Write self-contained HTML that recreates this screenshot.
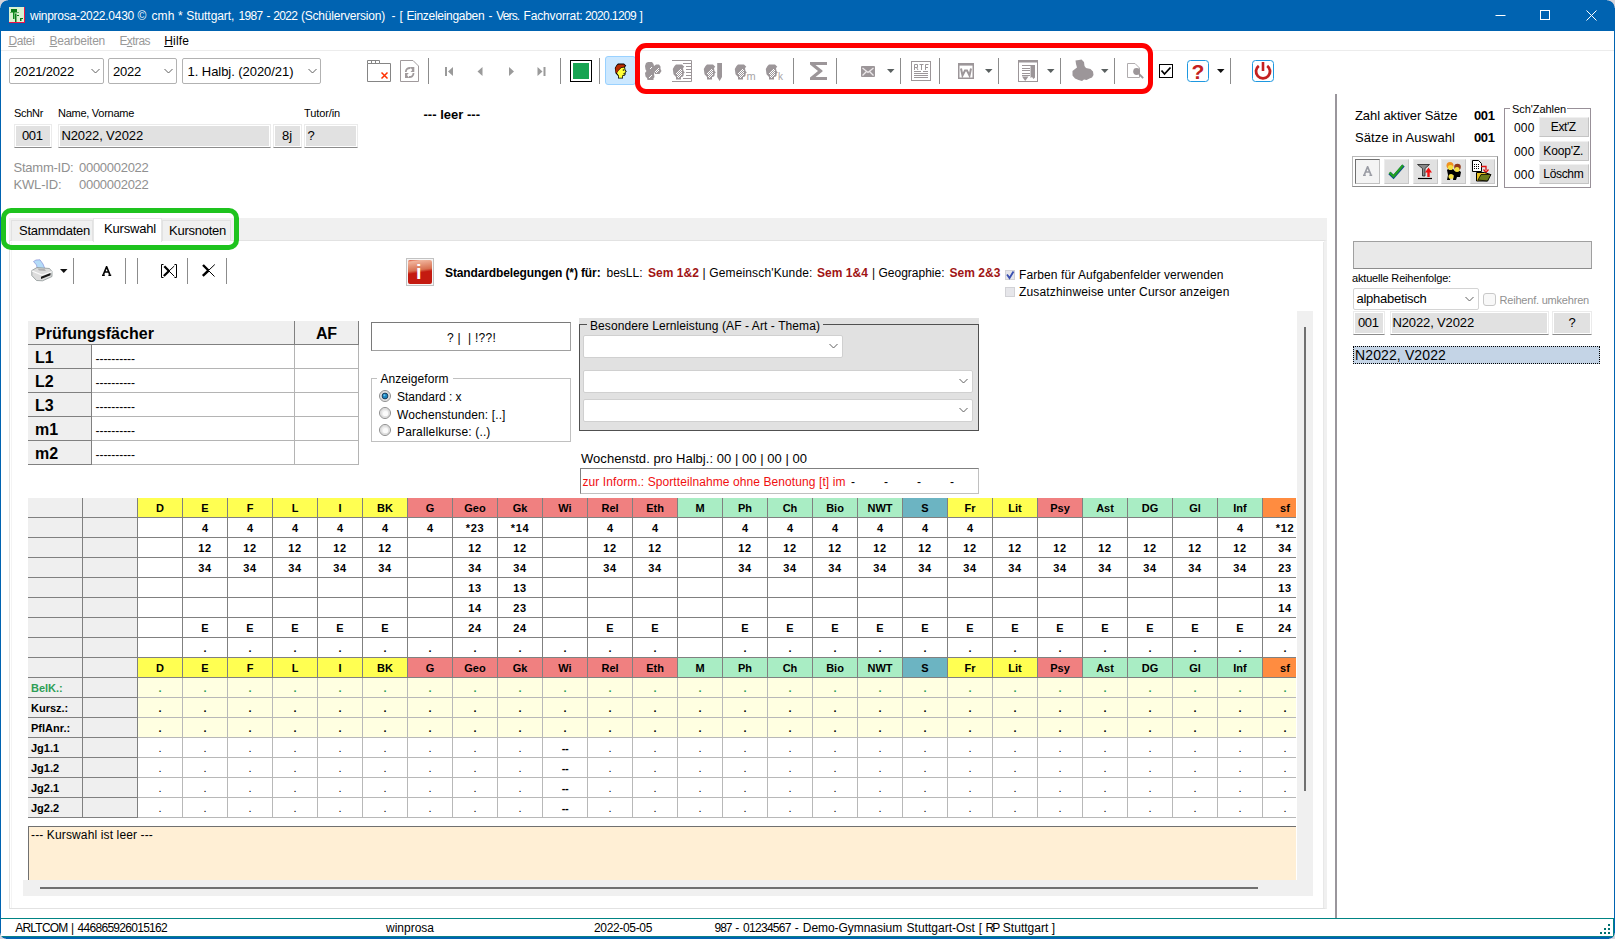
<!DOCTYPE html>
<html><head><meta charset="utf-8"><title>winprosa</title>
<style>
html,body{margin:0;padding:0;}
body{width:1615px;height:939px;overflow:hidden;background:#fff;position:relative;font-family:"Liberation Sans",sans-serif;}
.b{position:absolute;box-sizing:border-box;}
.t{position:absolute;line-height:1;white-space:pre;font-family:"Liberation Sans",sans-serif;}
u{text-decoration:underline;text-underline-offset:1px;}
.gc{position:absolute;width:44px;height:19px;line-height:19px;text-align:center;font-size:11px;font-weight:bold;white-space:pre;padding-top:1px;box-sizing:content-box;}
</style></head><body>
<div class="b" style="left:0px;top:0px;width:1615px;height:31px;background:#0063b1;"></div>
<div class="b" style="left:0px;top:31px;width:1px;height:908px;background:#0063b1;"></div>
<div class="b" style="left:1614px;top:31px;width:1px;height:908px;background:#0063b1;"></div>
<svg class="b" style="left:9px;top:7px;" width="16" height="16" viewBox="0 0 16 16"><rect x="0" y="0" width="16" height="16" fill="#d8f2d2"/><rect x="15" y="0" width="1" height="16" fill="#f01048"/><rect x="0" y="15" width="16" height="1" fill="#f01048"/>
<rect x="2" y="2" width="6" height="3" fill="#0a7a1a"/><rect x="1" y="5" width="9" height="0.700" fill="#3a9a3a"/><rect x="4" y="5" width="1.500" height="7" fill="#0a8a1a"/><rect x="6" y="6.500" width="1.500" height="8.500" fill="#0a7a1a"/><rect x="8" y="8" width="2" height="1" fill="#0a7a1a"/><rect x="11" y="11" width="1.500" height="3" fill="#0a7a1a"/><rect x="12" y="11" width="2" height="1" fill="#0a7a1a"/></svg>
<div class="t" style="left:30px;top:9.84px;font-size:12px;color:#fff;letter-spacing:-0.264px;">winprosa-2022.0430</div>
<div class="t" style="left:137.5px;top:9.84px;font-size:12px;color:#fff;letter-spacing:0.658px;">©</div>
<div class="t" style="left:151.5px;top:9.84px;font-size:12px;color:#fff;letter-spacing:0.11px;">cmh</div>
<div class="t" style="left:178px;top:9.84px;font-size:12px;color:#fff;">*</div>
<div class="t" style="left:186.3px;top:9.84px;font-size:12px;color:#fff;letter-spacing:-0.069px;">Stuttgart,</div>
<div class="t" style="left:238.5px;top:9.84px;font-size:12px;color:#fff;letter-spacing:-0.674px;">1987</div>
<div class="t" style="left:266.6px;top:9.84px;font-size:12px;color:#fff;">-</div>
<div class="t" style="left:273.2px;top:9.84px;font-size:12px;color:#fff;letter-spacing:-0.674px;">2022</div>
<div class="t" style="left:301px;top:9.84px;font-size:12px;color:#fff;letter-spacing:-0.21px;">(Schülerversion)</div>
<div class="t" style="left:391.6px;top:9.84px;font-size:12px;color:#fff;">-</div>
<div class="t" style="left:399.5px;top:9.84px;font-size:12px;color:#fff;">[</div>
<div class="t" style="left:406.4px;top:9.84px;font-size:12px;color:#fff;letter-spacing:-0.291px;">Einzeleingaben</div>
<div class="t" style="left:488.6px;top:9.84px;font-size:12px;color:#fff;">-</div>
<div class="t" style="left:496.3px;top:9.84px;font-size:12px;color:#fff;letter-spacing:-0.869px;">Vers.</div>
<div class="t" style="left:523.5px;top:9.84px;font-size:12px;color:#fff;letter-spacing:-0.153px;">Fachvorrat:</div>
<div class="t" style="left:585px;top:9.84px;font-size:12px;color:#fff;letter-spacing:-0.636px;">2020.1209</div>
<div class="t" style="left:639.6px;top:9.84px;font-size:12px;color:#fff;">]</div>
<svg class="b" style="left:1490px;top:5px;" width="120" height="22" viewBox="0 0 120 22"><path d="M5.5 10.5h10" stroke="#fff" stroke-width="1" fill="none"/>
<rect x="50.5" y="5.500" width="9" height="9" stroke="#fff" stroke-width="1" fill="none"/>
<path d="M96.500 5.500l10 10M106.500 5.500l-10 10" stroke="#fff" stroke-width="1" fill="none"/></svg>
<div class="b" style="left:1px;top:31px;width:1613px;height:19px;background:#fff;"></div>
<div class="t" style="left:8.4px;top:34.84px;font-size:12px;color:#999;letter-spacing:-0.403px;"><u>D</u>atei</div>
<div class="t" style="left:49.5px;top:34.84px;font-size:12px;color:#999;letter-spacing:-0.255px;"><u>B</u>earbeiten</div>
<div class="t" style="left:119.4px;top:34.84px;font-size:12px;color:#999;letter-spacing:-0.585px;">E<u>x</u>tras</div>
<div class="t" style="left:164.2px;top:34.84px;font-size:12px;color:#000;letter-spacing:0.199px;"><u>H</u>ilfe</div>
<div class="b" style="left:1px;top:50px;width:1613px;height:1px;background:#ececec;"></div>
<div class="b" style="left:1px;top:919px;width:1613px;height:18px;background:#fff;"></div>
<div class="b" style="left:1px;top:918px;width:1613px;height:1px;background:#008484;"></div>
<div class="b" style="left:1613px;top:918px;width:1px;height:19px;background:#008484;"></div>
<div class="b" style="left:1px;top:936px;width:1613px;height:1px;background:#0a8088;"></div>
<div class="b" style="left:0px;top:937px;width:1615px;height:2px;background:#0063b1;"></div>
<div class="b" style="left:1608px;top:924px;width:2px;height:2px;background:#007070;"></div>
<div class="b" style="left:1604px;top:928px;width:2px;height:2px;background:#007070;"></div>
<div class="b" style="left:1608px;top:928px;width:2px;height:2px;background:#007070;"></div>
<div class="b" style="left:1600px;top:932px;width:2px;height:2px;background:#007070;"></div>
<div class="b" style="left:1604px;top:932px;width:2px;height:2px;background:#007070;"></div>
<div class="b" style="left:1608px;top:932px;width:2px;height:2px;background:#007070;"></div>
<div class="t" style="left:15.3px;top:921.84px;font-size:12px;color:#000;letter-spacing:-0.797px;">ARLTCOM</div>
<div class="t" style="left:71px;top:921.84px;font-size:12px;color:#000;">|</div>
<div class="t" style="left:77.6px;top:921.84px;font-size:12px;color:#000;letter-spacing:-0.714px;">446865926015162</div>
<div class="t" style="left:386px;top:921.84px;font-size:12px;color:#000;letter-spacing:-0.003px;">winprosa</div>
<div class="t" style="left:594px;top:921.84px;font-size:12px;color:#000;letter-spacing:-0.339px;">2022-05-05</div>
<div class="t" style="left:714.5px;top:921.84px;font-size:12px;color:#000;letter-spacing:-1.007px;">987</div>
<div class="t" style="left:735.3px;top:921.84px;font-size:12px;color:#000;">-</div>
<div class="t" style="left:743px;top:921.84px;font-size:12px;color:#000;letter-spacing:-0.699px;">01234567</div>
<div class="t" style="left:794.8px;top:921.84px;font-size:12px;color:#000;">-</div>
<div class="t" style="left:802.8px;top:921.84px;font-size:12px;color:#000;letter-spacing:-0.052px;">Demo-Gymnasium</div>
<div class="t" style="left:906.6px;top:921.84px;font-size:12px;color:#000;letter-spacing:0.014px;">Stuttgart-Ost</div>
<div class="t" style="left:978.8px;top:921.84px;font-size:12px;color:#000;">[</div>
<div class="t" style="left:985.4px;top:921.84px;font-size:12px;color:#000;letter-spacing:-1.735px;">RP</div>
<div class="t" style="left:1002.8px;top:921.84px;font-size:12px;color:#000;letter-spacing:0.027px;">Stuttgart</div>
<div class="t" style="left:1051.8px;top:921.84px;font-size:12px;color:#000;">]</div>
<div class="b" style="left:0px;top:0px;width:8px;height:8px;background:radial-gradient(circle at 100% 100%, transparent 7.200px, #d4d4dc 8px);"></div>
<div class="b" style="left:1607px;top:0px;width:8px;height:8px;background:radial-gradient(circle at 0 100%, transparent 7.200px, #d4d4dc 8px);"></div>
<div class="b" style="left:0px;top:933px;width:6px;height:6px;background:radial-gradient(circle at 100% 0, transparent 5.200px, #d4d4dc 6px);"></div>
<div class="b" style="left:1609px;top:933px;width:6px;height:6px;background:radial-gradient(circle at 0 0, transparent 5.200px, #d4d4dc 6px);"></div>
<div class="b" style="left:9px;top:58px;width:95px;height:26px;background:#fff;border:1px solid #b2b2b2;border-radius:2px;"></div>
<div class="t" style="left:14px;top:65.00px;font-size:13px;color:#000;letter-spacing:-0.161px;">2021/2022</div>
<svg class="b" style="left:90px;top:67px;" width="11" height="8" viewBox="0 0 11 8"><path d="M1.500 2.000L5.500 6.000L9.500 2.000" fill="none" stroke="#606060" stroke-width="1"/></svg>
<div class="b" style="left:108px;top:58px;width:69px;height:26px;background:#fff;border:1px solid #b2b2b2;border-radius:2px;"></div>
<div class="t" style="left:113px;top:65.00px;font-size:13px;color:#000;letter-spacing:-0.23px;">2022</div>
<svg class="b" style="left:163px;top:67px;" width="11" height="8" viewBox="0 0 11 8"><path d="M1.500 2.000L5.500 6.000L9.500 2.000" fill="none" stroke="#606060" stroke-width="1"/></svg>
<div class="b" style="left:182px;top:58px;width:139px;height:26px;background:#fff;border:1px solid #b2b2b2;border-radius:2px;"></div>
<div class="t" style="left:187.5px;top:65.00px;font-size:13px;color:#000;letter-spacing:-0.05px;">1. Halbj. (2020/21)</div>
<svg class="b" style="left:307px;top:67px;" width="11" height="8" viewBox="0 0 11 8"><path d="M1.500 2.000L5.500 6.000L9.500 2.000" fill="none" stroke="#606060" stroke-width="1"/></svg>
<svg class="b" style="left:367px;top:60px;" width="25" height="23" viewBox="0 0 25 23"><path d="M0.500 3.500V0.500H12.500V3.500H23.500V21.500H0.500V3.500H12.500M4.500 0.500V3.500M8.500 0.500V3.500" fill="none" stroke="#858585" stroke-width="1"/><path d="M14.500 12.500L20.500 18.500M20.500 12.500L14.500 18.500" stroke="#ff3000" stroke-width="1.500" fill="none"/></svg>
<svg class="b" style="left:400px;top:60px;" width="20" height="23" viewBox="0 0 20 23"><path d="M0.500 0.500H13L18.500 6V21.500H0.500Z" fill="none" stroke="#a09a9c" stroke-width="1"/><path d="M5.800 12C5.800 9 8 7.800 10.500 8" fill="none" stroke="#a09a9c" stroke-width="1.800"/><path d="M10 7H14.300V12H10.500L12.300 10z" fill="#a09a9c"/><path d="M13.500 13C13.500 16 11.500 17.200 9 17" fill="none" stroke="#a09a9c" stroke-width="1.800"/><path d="M9.300 18H5V13H8.800L7 15z" fill="#a09a9c"/></svg>
<div class="b" style="left:428px;top:58px;width:1px;height:26px;background:#8c8c8c;"></div>
<svg class="b" style="left:445px;top:67px;" width="9" height="10" viewBox="0 0 9 10"><rect x="0" y="0" width="2" height="9" fill="#9a9a9a"/><path d="M8 0v9L3 4.500z" fill="#9a9a9a"/></svg>
<svg class="b" style="left:477px;top:67px;" width="6" height="10" viewBox="0 0 6 10"><path d="M5.500 0v9L0.500 4.500z" fill="#9a9a9a"/></svg>
<svg class="b" style="left:509px;top:67px;" width="6" height="10" viewBox="0 0 6 10"><path d="M0 0v9L5 4.500z" fill="#9a9a9a"/></svg>
<svg class="b" style="left:537px;top:67px;" width="10" height="10" viewBox="0 0 10 10"><rect x="6.500" y="0" width="2" height="9" fill="#9a9a9a"/><path d="M0.500 0v9L5.500 4.500z" fill="#9a9a9a"/></svg>
<div class="b" style="left:560px;top:58px;width:1px;height:26px;background:#8c8c8c;"></div>
<div class="b" style="left:570px;top:60px;width:22px;height:22px;background:#fff;border:1px solid #000;"></div>
<div class="b" style="left:573px;top:63px;width:16px;height:16px;background:#16a452;"></div>
<div class="b" style="left:599px;top:58px;width:1px;height:26px;background:#8c8c8c;"></div>
<div class="b" style="left:605px;top:56px;width:31px;height:29px;background:#cce8ff;border:1px solid #99d1ff;border-radius:3px;"></div>
<svg class="b" style="left:614px;top:63px;" width="14" height="17" viewBox="0 0 14 17"><path d="M4 0.500H10L12.300 2.800L11 4L11.500 7L12.800 8.600L11.600 9.600V11.200L11 12.600L9 13V15.500H4V13L1.500 10.200L0.800 5L2.500 2z" fill="#000"/><path d="M4.600 7.600L7.200 5L10.300 4.400L10.600 7.200L11.700 8.600L10.700 9.400V11L10.300 11.900L8.300 12.300V14.700H4.800V12.600L2.900 10z" fill="#ffff38"/><path d="M1.600 9.400L1.500 5L3 2.500L4.500 1.500H9.800L11.300 3L10 3.800L7 4.500L4.500 7L3 9.800z" fill="#b82a00"/><rect x="8.800" y="6.400" width="1.100" height="1.300" fill="#000"/><path d="M9.300 10.800H11" stroke="#000" stroke-width="0.900"/></svg>
<div class="b" style="left:635px;top:43px;width:518px;height:51px;border:5px solid #ff0000;border-radius:11px;"></div>
<svg class="b" style="left:0;top:0" width="0" height="0"><defs><pattern id="ck" width="2" height="2" patternUnits="userSpaceOnUse"><rect width="2" height="2" fill="#fff"/><rect width="1" height="1" fill="#9c9699"/><rect x="1" y="1" width="1" height="1" fill="#9c9699"/></pattern></defs></svg>
<svg class="b" style="left:644px;top:61px;" width="18" height="20" viewBox="0 0 18 20"><path d="M2 2L4 1H8L9.500 3L10 5L12 3.500H15L16.500 5.500V8L17.500 10L16.500 11.500L15.500 13H11L10.500 11L10 12.500L10.500 16L9.500 17.500V19H3.500L3 17L1.500 15.500L1 12L2.500 10L1.500 8.500L1 5z" fill="#9c9699"/><path d="M5 7L8 4V6L6 9zM11 10L15 6V9L12 12zM4 16L8 12V15L5 18z" fill="url(#ck)" shape-rendering="crispEdges"/></svg>
<svg class="b" style="left:672px;top:60px;" width="21" height="23" viewBox="0 0 21 23"><path d="M0 0.500H19.500V21.500H0" stroke="#9c9699" stroke-width="1" fill="none"/><path d="M11 3.500h8M14 6.500h5M14 9.500h5M14 12.500h5M14 15.500h5M11 18.500h8" stroke="#9c9699" stroke-width="1"/><g transform="translate(0,4) scale(1.0)"><path d="M4 0.500H10L12.300 2.800L11 4L11.500 7L12.800 8.600L11.600 9.600V11.200L11 12.600L9 13V15.500H4V13L1.500 10.200L0.800 5L2.500 2z" fill="#9c9699"/><path d="M5 8L8 5H10V11L8 12V14H5V12L4 10z" fill="url(#ck)" shape-rendering="crispEdges"/></g></svg>
<svg class="b" style="left:702px;top:62px;" width="22" height="20" viewBox="0 0 22 20"><g transform="translate(1,2) scale(1.0)"><path d="M4 0.500H10L12.300 2.800L11 4L11.500 7L12.800 8.600L11.600 9.600V11.200L11 12.600L9 13V15.500H4V13L1.500 10.200L0.800 5L2.500 2z" fill="#9c9699"/><path d="M5 8L8 5H10V11L8 12V14H5V12L4 10z" fill="url(#ck)" shape-rendering="crispEdges"/></g><path d="M15.200 1h4.800v14l-2.400 4l-2.400-4z" fill="#9c9699"/></svg>
<svg class="b" style="left:733px;top:62px;" width="14" height="18" viewBox="0 0 14 18"><g transform="translate(1,2) scale(1.0)"><path d="M4 0.500H10L12.300 2.800L11 4L11.500 7L12.800 8.600L11.600 9.600V11.200L11 12.600L9 13V15.500H4V13L1.500 10.200L0.800 5L2.500 2z" fill="#9c9699"/><path d="M5 8L8 5H10V11L8 12V14H5V12L4 10z" fill="url(#ck)" shape-rendering="crispEdges"/></g></svg>
<div class="t" style="left:746.5px;top:71.19px;font-size:11px;color:#a8a4a6;">m</div>
<svg class="b" style="left:764px;top:62px;" width="14" height="18" viewBox="0 0 14 18"><g transform="translate(1,2) scale(1.0)"><path d="M4 0.500H10L12.300 2.800L11 4L11.500 7L12.800 8.600L11.600 9.600V11.200L11 12.600L9 13V15.500H4V13L1.500 10.200L0.800 5L2.500 2z" fill="#9c9699"/><path d="M5 8L8 5H10V11L8 12V14H5V12L4 10z" fill="url(#ck)" shape-rendering="crispEdges"/></g></svg>
<div class="t" style="left:778px;top:72.03px;font-size:10px;color:#a8a4a6;">k</div>
<div class="b" style="left:793px;top:58px;width:1px;height:26px;background:#8c8c8c;"></div>
<svg class="b" style="left:810px;top:62px;" width="18" height="18" viewBox="0 0 18 18"><path d="M0 0H17V3H5.500L12.500 8.500V9.500L5.500 15H17V18H0V15.500L8 9L0 2.500z" fill="#9c9699"/></svg>
<div class="b" style="left:836px;top:58px;width:1px;height:26px;background:#8c8c8c;"></div>
<svg class="b" style="left:861px;top:66px;" width="14" height="11" viewBox="0 0 14 11"><rect x="0" y="0" width="14" height="11" rx="1" fill="#9c9699"/><path d="M1.500 2L7 6.500L12.500 2M1.500 9.500L5.500 5.500M12.500 9.500L8.500 5.500" stroke="#ece8ea" stroke-width="1.300" fill="none"/></svg>
<svg class="b" style="left:887px;top:69px;" width="8" height="4" viewBox="0 0 8 4"><path d="M0 0h7.500L3.750 4z" fill="#5a6060"/></svg>
<div class="b" style="left:900px;top:58px;width:1px;height:26px;background:#8c8c8c;"></div>
<svg class="b" style="left:911px;top:61px;" width="21" height="21" viewBox="0 0 21 21"><rect x="0.500" y="0.500" width="19" height="19" fill="#fff" stroke="#9c9699"/><path d="M3 10.500h7M12 10.500h5M3 12.500h14M3 14.500h14M3 16.500h14" stroke="#9c9699" stroke-width="1"/><path d="M3.500 9V3.500H6.500V6.500H3.500M5.500 6.500L7 9M8.500 3.500H12.500M10.500 3.500V9M14.500 9V3.500H17.500M14.500 6.500H17" fill="none" stroke="#9c9699" stroke-width="1"/></svg>
<div class="b" style="left:939px;top:58px;width:1px;height:26px;background:#8c8c8c;"></div>
<svg class="b" style="left:958px;top:63px;" width="17" height="17" viewBox="0 0 17 17"><rect x="0.750" y="0.750" width="14.500" height="14.500" fill="#fff" stroke="#9c9699" stroke-width="1.500"/><rect x="0" y="0" width="16" height="2.600" fill="#9c9699"/><path d="M3 5.500L4.500 12.500L7 7.500H9L11.500 12.500L13 5.500" fill="none" stroke="#9c9699" stroke-width="2"/></svg>
<svg class="b" style="left:985px;top:69px;" width="8" height="4" viewBox="0 0 8 4"><path d="M0 0h7.500L3.750 4z" fill="#5a6060"/></svg>
<div class="b" style="left:998px;top:58px;width:1px;height:26px;background:#8c8c8c;"></div>
<svg class="b" style="left:1018px;top:60px;" width="21" height="23" viewBox="0 0 21 23"><rect x="0.500" y="0.500" width="19" height="21" fill="#fff" stroke="#9c9699"/><rect x="0" y="0" width="20" height="2.500" fill="#9c9699"/><path d="M4 5.500h9M4 8.500h8M4 10.500h8M4 13.500h8M4 15.500h8" stroke="#9c9699" stroke-width="1"/><path d="M12.500 5H17V17.500L15.500 19L14 17L12.500 18z" fill="#9c9699"/><path d="M4 16.500H10.500L7.200 21z" fill="#9c9699"/></svg>
<svg class="b" style="left:1047px;top:69px;" width="8" height="4" viewBox="0 0 8 4"><path d="M0 0h7.500L3.750 4z" fill="#5a6060"/></svg>
<div class="b" style="left:1060px;top:58px;width:1px;height:26px;background:#8c8c8c;"></div>
<svg class="b" style="left:1072px;top:59px;" width="23" height="23" viewBox="0 0 23 23"><path d="M3.500 1.500L7 1L9.500 0.500L12 3L12.500 7L14 9L18.500 10L21 12.500L21.500 16L20 18.500L17.500 19.500L14.500 21L12 20.500L10 22L6.500 21L3 19.500L0.500 16.500V12L3 10L5 8.500L4 5z" fill="#9c9699"/></svg>
<svg class="b" style="left:1101px;top:69px;" width="8" height="4" viewBox="0 0 8 4"><path d="M0 0h7.500L3.750 4z" fill="#5a6060"/></svg>
<div class="b" style="left:1114px;top:58px;width:1px;height:26px;background:#8c8c8c;"></div>
<svg class="b" style="left:1127px;top:63px;" width="18" height="16" viewBox="0 0 18 16"><path d="M0.500 0.500H8L12.500 5V14.500H0.500Z" fill="#fff" stroke="#b0acae" stroke-width="1"/><circle cx="9.600" cy="8.500" r="3.400" fill="#9c9699"/><path d="M12 11L16.200 15.200" stroke="#9c9699" stroke-width="1.800"/></svg>
<div class="b" style="left:1159px;top:64px;width:14px;height:14px;background:#fff;border:1px solid #000;"></div>
<svg class="b" style="left:1159px;top:64px;" width="14" height="14" viewBox="0 0 14 14"><path d="M2.500 6.500L5.500 10L11.500 3.500" fill="none" stroke="#000" stroke-width="1.800"/></svg>
<div class="b" style="left:1187px;top:60px;width:22px;height:22px;background:#fff;border:1.500px solid #1e98e0;border-radius:3.500px;"></div>
<div class="t" style="left:1191.5px;top:61.02px;font-size:21px;color:#c42020;font-weight:bold;">?</div>
<svg class="b" style="left:1217px;top:69px;" width="8" height="4" viewBox="0 0 8 4"><path d="M0 0h7.500L3.750 4z" fill="#111"/></svg>
<div class="b" style="left:1230px;top:58px;width:1px;height:26px;background:#8c8c8c;"></div>
<div class="b" style="left:1252px;top:60px;width:22px;height:22px;background:#fff;border:1.500px solid #1e98e0;border-radius:3.500px;"></div>
<svg class="b" style="left:1252px;top:60px;" width="22" height="22" viewBox="0 0 22 22"><path d="M6.800 5.800A7 7 0 1 0 15.200 5.800" fill="none" stroke="#c42020" stroke-width="2.800"/><path d="M11 2V11" stroke="#c42020" stroke-width="2.600"/></svg>
<div class="t" style="left:14px;top:107.69px;font-size:11px;color:#000;letter-spacing:-0.313px;">SchNr</div>
<div class="t" style="left:58px;top:107.69px;font-size:11px;color:#000;letter-spacing:-0.268px;">Name, Vorname</div>
<div class="t" style="left:304px;top:107.69px;font-size:11px;color:#000;letter-spacing:-0.111px;">Tutor/in</div>
<div class="t" style="left:423.5px;top:107.50px;font-size:13px;color:#000;font-weight:bold;letter-spacing:0.014px;">--- leer ---</div>
<div class="b" style="left:14px;top:124px;width:38px;height:24px;background:#e1e1e1;border:1px solid #ebebeb;border-bottom:1px solid #8c8c8c;box-shadow:inset 0 0 0 1px #fff;"></div>
<div class="t" style="left:22px;top:129.00px;font-size:13px;color:#000;letter-spacing:-0.397px;">001</div>
<div class="b" style="left:58px;top:124px;width:213px;height:24px;background:#e1e1e1;border:1px solid #ebebeb;border-bottom:1px solid #8c8c8c;box-shadow:inset 0 0 0 1px #fff;"></div>
<div class="t" style="left:61.5px;top:129.00px;font-size:13px;color:#000;letter-spacing:-0.135px;">N2022, V2022</div>
<div class="b" style="left:273px;top:124px;width:29px;height:24px;background:#e1e1e1;border:1px solid #ebebeb;border-bottom:1px solid #8c8c8c;box-shadow:inset 0 0 0 1px #fff;"></div>
<div class="t" style="left:282px;top:129.00px;font-size:13px;color:#000;">8j</div>
<div class="b" style="left:304px;top:124px;width:54px;height:24px;background:#e1e1e1;border:1px solid #ebebeb;border-bottom:1px solid #8c8c8c;box-shadow:inset 0 0 0 1px #fff;"></div>
<div class="t" style="left:307.5px;top:129.00px;font-size:13px;color:#000;">?</div>
<div class="t" style="left:13.5px;top:161.00px;font-size:13px;color:#909090;letter-spacing:-0.235px;">Stamm-ID:</div>
<div class="t" style="left:79px;top:161.00px;font-size:13px;color:#909090;letter-spacing:-0.28px;">0000002022</div>
<div class="t" style="left:13.5px;top:178.00px;font-size:13px;color:#909090;letter-spacing:-0.159px;">KWL-ID:</div>
<div class="t" style="left:79px;top:178.00px;font-size:13px;color:#909090;letter-spacing:-0.28px;">0000002022</div>
<div class="b" style="left:9px;top:218px;width:1318px;height:23px;background:#f0f0f0;"></div>
<div class="b" style="left:9px;top:240px;width:1318px;height:669px;background:#fff;border:1px solid #e2e2e2;border-right:3px solid #f0f0f0;"></div>
<div class="b" style="left:1323px;top:242px;width:1px;height:666px;background:#e8e8e8;"></div>
<div class="b" style="left:11px;top:242px;width:1px;height:666px;background:#f4f4f4;"></div>
<div class="b" style="left:11px;top:220px;width:82px;height:21px;background:#f0f0f0;border:1px solid #e2e2e2;border-bottom:none;"></div>
<div class="b" style="left:162px;top:220px;width:69px;height:21px;background:#f0f0f0;border:1px solid #e2e2e2;border-bottom:none;"></div>
<div class="b" style="left:93px;top:218px;width:69px;height:24px;background:#fff;border:1px solid #e6e6e6;border-bottom:none;"></div>
<div class="t" style="left:19px;top:224.00px;font-size:13px;color:#000;letter-spacing:-0.27px;">Stammdaten</div>
<div class="t" style="left:104px;top:222.00px;font-size:13px;color:#000;letter-spacing:-0.184px;">Kurswahl</div>
<div class="t" style="left:169px;top:224.00px;font-size:13px;color:#000;letter-spacing:-0.252px;">Kursnoten</div>
<div class="b" style="left:1px;top:208px;width:238px;height:42px;border:5px solid #1ec31e;border-radius:10px;"></div>
<svg class="b" style="left:31px;top:259px;" width="22" height="23" viewBox="0 0 22 23"><path d="M2.500 2.500L5 1L9 0.800L12 5L14 10L6.500 11L5.500 6z" fill="#b4dcf8" stroke="#8890d8" stroke-width="0.700"/>
<path d="M0.800 11.500L6 8.500L18.500 9.500L21 12.500V17.500L11.500 21.800L5.500 21.500L0.800 16.500z" fill="#dcdcdc" stroke="#8c9494" stroke-width="0.800"/>
<path d="M1 12L11 16L21 12.800" fill="none" stroke="#fafafa" stroke-width="1.200"/>
<path d="M10 17.800L19.500 14V16.200L10 20z" fill="#181818"/>
<path d="M6.500 9.500L8 11.500L15 12L13.500 10z" fill="#b0b0b0"/></svg>
<svg class="b" style="left:60px;top:269px;" width="8" height="4" viewBox="0 0 8 4"><path d="M0 0h7.500L3.750 4z" fill="#111"/></svg>
<div class="b" style="left:73px;top:258px;width:1px;height:26px;background:#8c8c8c;"></div>
<svg class="b" style="left:102px;top:266px;" width="10" height="10" viewBox="0 0 10 10"><path d="M1.300 8.800L4.600 0.800L7.900 8.800M2.600 6H6.600" fill="none" stroke="#000" stroke-width="1.700"/><path d="M0 9.200H2.800M6.400 9.200H9.200" stroke="#000" stroke-width="1.500"/></svg>
<div class="b" style="left:125px;top:258px;width:1px;height:26px;background:#8c8c8c;"></div>
<div class="b" style="left:137px;top:258px;width:1px;height:26px;background:#8c8c8c;"></div>
<svg class="b" style="left:160px;top:263px;" width="18" height="16" viewBox="0 0 18 16"><path d="M3.500 1.500H1.500V14.500H3.500M14.500 1.500H16.500V14.500H14.500" fill="none" stroke="#000" stroke-width="1"/><path d="M4.300 3.300L9 8M3.800 13L9 8" stroke="#000" stroke-width="2.300" fill="none"/><path d="M9 8L14.300 13.300M9 8L14.300 3" stroke="#000" stroke-width="1" fill="none"/></svg>
<div class="b" style="left:187px;top:258px;width:1px;height:26px;background:#8c8c8c;"></div>
<svg class="b" style="left:201px;top:263px;" width="16" height="16" viewBox="0 0 16 16"><path d="M2 2L7.500 7.500M1.800 12.800L7.500 7.500" stroke="#000" stroke-width="2.400" fill="none"/><path d="M7.500 7.500L13.500 13.500M7.500 7.500L13.800 1.500" stroke="#000" stroke-width="1" fill="none"/></svg>
<div class="b" style="left:226px;top:258px;width:1px;height:26px;background:#8c8c8c;"></div>
<div class="b" style="left:406px;top:258px;width:28px;height:28px;background:#f6f6f6;border:1px solid #c2c2c2;"></div>
<div class="b" style="left:408px;top:260px;width:24px;height:24px;border-radius:2px;background:linear-gradient(172deg,#d8482c 0%,#f0b49c 8%,#d87050 42%,#c41a10 52%,#c41a10 100%);"></div>
<div class="t" style="left:416px;top:262.07px;font-size:20px;color:#fff;font-weight:bold;font-family:"Liberation Serif",serif;">i</div>
<div class="t" style="left:445px;top:266.84px;font-size:12px;color:#000;font-weight:bold;letter-spacing:-0.117px;">Standardbelegungen (*) für:</div>
<div class="t" style="left:606.5px;top:266.84px;font-size:12px;color:#000;letter-spacing:-0.005px;">besLL:</div>
<div class="t" style="left:648px;top:266.84px;font-size:12px;color:#a01414;font-weight:bold;letter-spacing:0.043px;">Sem 1&amp;2</div>
<div class="t" style="left:702.5px;top:266.84px;font-size:12px;color:#000;letter-spacing:0.141px;">| Gemeinsch'Kunde:</div>
<div class="t" style="left:817px;top:266.84px;font-size:12px;color:#a01414;font-weight:bold;letter-spacing:0.043px;">Sem 1&amp;4</div>
<div class="t" style="left:872px;top:266.84px;font-size:12px;color:#000;letter-spacing:0.0px;">| Geographie:</div>
<div class="t" style="left:949.5px;top:266.84px;font-size:12px;color:#a01414;font-weight:bold;letter-spacing:0.043px;">Sem 2&amp;3</div>
<div class="b" style="left:1005px;top:270px;width:10px;height:10px;background:#e6e6ea;border:1px solid #d2d2d6;"></div>
<svg class="b" style="left:1005px;top:270px;" width="10" height="10" viewBox="0 0 10 10"><path d="M2 4.500L4.500 8L8.500 1.500" fill="none" stroke="#3a50b0" stroke-width="1.800"/></svg>
<div class="b" style="left:1005px;top:287px;width:10px;height:10px;background:#e6e6ea;border:1px solid #d2d2d6;"></div>
<div class="t" style="left:1019px;top:268.54px;font-size:12px;color:#000;letter-spacing:0.086px;">Farben für Aufgabenfelder verwenden</div>
<div class="t" style="left:1019px;top:285.84px;font-size:12px;color:#000;letter-spacing:0.159px;">Zusatzhinweise unter Cursor anzeigen</div>
<div class="b" style="left:28px;top:321px;width:331px;height:24px;background:#efefef;"></div>
<div class="b" style="left:28px;top:345px;width:64px;height:120px;background:#efefef;"></div>
<div class="b" style="left:92px;top:368px;width:267px;height:1px;background:#b4b4b4;"></div>
<div class="b" style="left:92px;top:392px;width:267px;height:1px;background:#b4b4b4;"></div>
<div class="b" style="left:92px;top:416px;width:267px;height:1px;background:#b4b4b4;"></div>
<div class="b" style="left:92px;top:440px;width:267px;height:1px;background:#b4b4b4;"></div>
<div class="b" style="left:92px;top:464px;width:267px;height:1px;background:#b4b4b4;"></div>
<div class="b" style="left:294px;top:345px;width:1px;height:120px;background:#b4b4b4;"></div>
<div class="b" style="left:358px;top:321px;width:1px;height:144px;background:#b4b4b4;"></div>
<div class="b" style="left:28px;top:344px;width:331px;height:1px;background:#808080;"></div>
<div class="b" style="left:294px;top:321px;width:1px;height:24px;background:#808080;"></div>
<div class="b" style="left:358px;top:321px;width:1px;height:24px;background:#808080;"></div>
<div class="b" style="left:91px;top:345px;width:1px;height:120px;background:#808080;"></div>
<div class="b" style="left:28px;top:368px;width:64px;height:1px;background:#808080;"></div>
<div class="b" style="left:28px;top:392px;width:64px;height:1px;background:#808080;"></div>
<div class="b" style="left:28px;top:416px;width:64px;height:1px;background:#808080;"></div>
<div class="b" style="left:28px;top:440px;width:64px;height:1px;background:#808080;"></div>
<div class="b" style="left:28px;top:464px;width:64px;height:1px;background:#808080;"></div>
<div class="t" style="left:35px;top:326.26px;font-size:16px;color:#000;font-weight:bold;letter-spacing:0.054px;">Prüfungsfächer</div>
<div class="t" style="left:316px;top:326.26px;font-size:16px;color:#000;font-weight:bold;letter-spacing:-0.414px;">AF</div>
<div class="t" style="left:35px;top:350.16px;font-size:16px;color:#000;font-weight:bold;">L1</div>
<div class="t" style="left:95.5px;top:352.84px;font-size:12px;color:#000;letter-spacing:-0.047px;">----------</div>
<div class="t" style="left:35px;top:374.16px;font-size:16px;color:#000;font-weight:bold;">L2</div>
<div class="t" style="left:95.5px;top:376.84px;font-size:12px;color:#000;letter-spacing:-0.047px;">----------</div>
<div class="t" style="left:35px;top:398.16px;font-size:16px;color:#000;font-weight:bold;">L3</div>
<div class="t" style="left:95.5px;top:400.84px;font-size:12px;color:#000;letter-spacing:-0.047px;">----------</div>
<div class="t" style="left:35px;top:422.16px;font-size:16px;color:#000;font-weight:bold;">m1</div>
<div class="t" style="left:95.5px;top:424.84px;font-size:12px;color:#000;letter-spacing:-0.047px;">----------</div>
<div class="t" style="left:35px;top:446.16px;font-size:16px;color:#000;font-weight:bold;">m2</div>
<div class="t" style="left:95.5px;top:448.84px;font-size:12px;color:#000;letter-spacing:-0.047px;">----------</div>
<div class="b" style="left:371px;top:322px;width:200px;height:29px;background:#fff;border:1px solid #7a7a7a;border-right-color:#a0a0a0;border-bottom-color:#a0a0a0;"></div>
<div class="t" style="left:447px;top:331.84px;font-size:12px;color:#000;letter-spacing:0.249px;">? |  | !??!</div>
<div class="b" style="left:371px;top:378px;width:200px;height:64px;border:1px solid #c0c0c0;"></div>
<div class="b" style="left:377px;top:372px;width:76px;height:12px;background:#fff;"></div>
<div class="t" style="left:380.5px;top:372.84px;font-size:12px;color:#000;letter-spacing:0.057px;">Anzeigeform</div>
<svg class="b" style="left:378px;top:389px;" width="14" height="14" viewBox="0 0 14 14"><circle cx="7" cy="7" r="5.500" fill="#ededed" stroke="#8e8e8e" stroke-width="1"/><circle cx="7" cy="7" r="4.200" fill="none" stroke="#d4d4d4" stroke-width="1"/><circle cx="7.500" cy="7.500" r="2.600" fill="#fbfbfb"/><circle cx="7" cy="7" r="2.900" fill="#1d86c0" stroke="#16324e" stroke-width="0.900"/><circle cx="6.400" cy="6.300" r="1" fill="#6cc4ea"/></svg>
<svg class="b" style="left:378px;top:406px;" width="14" height="14" viewBox="0 0 14 14"><circle cx="7" cy="7" r="5.500" fill="#ededed" stroke="#8e8e8e" stroke-width="1"/><circle cx="7" cy="7" r="4.200" fill="none" stroke="#d4d4d4" stroke-width="1"/><circle cx="7.500" cy="7.500" r="2.600" fill="#fbfbfb"/></svg>
<svg class="b" style="left:378px;top:423px;" width="14" height="14" viewBox="0 0 14 14"><circle cx="7" cy="7" r="5.500" fill="#ededed" stroke="#8e8e8e" stroke-width="1"/><circle cx="7" cy="7" r="4.200" fill="none" stroke="#d4d4d4" stroke-width="1"/><circle cx="7.500" cy="7.500" r="2.600" fill="#fbfbfb"/></svg>
<div class="t" style="left:397px;top:391.34px;font-size:12px;color:#000;letter-spacing:-0.017px;">Standard : x</div>
<div class="t" style="left:397px;top:408.84px;font-size:12px;color:#000;letter-spacing:0.105px;">Wochenstunden: [..]</div>
<div class="t" style="left:397px;top:425.84px;font-size:12px;color:#000;letter-spacing:0.148px;">Parallelkurse: (..)</div>
<div class="b" style="left:579px;top:318px;width:400px;height:113px;background:#e1e1e1;"></div>
<div class="b" style="left:579px;top:324px;width:400px;height:107px;border:1px solid #505050;"></div>
<div class="b" style="left:587px;top:319px;width:236px;height:13px;background:#e1e1e1;"></div>
<div class="t" style="left:590px;top:319.84px;font-size:12px;color:#000;letter-spacing:0.084px;">Besondere Lernleistung (AF - Art - Thema)</div>
<div class="b" style="left:583px;top:335px;width:260px;height:23px;background:#fff;border:1px solid #d0d0d0;border-radius:2px;"></div>
<svg class="b" style="left:828px;top:342px;" width="11" height="8" viewBox="0 0 11 8"><path d="M1.500 2.000L5.500 6.000L9.500 2.000" fill="none" stroke="#606060" stroke-width="1"/></svg>
<div class="b" style="left:583px;top:370px;width:390px;height:23px;background:#fff;border:1px solid #d0d0d0;border-radius:2px;"></div>
<svg class="b" style="left:958px;top:377px;" width="11" height="8" viewBox="0 0 11 8"><path d="M1.500 2.000L5.500 6.000L9.500 2.000" fill="none" stroke="#606060" stroke-width="1"/></svg>
<div class="b" style="left:583px;top:399px;width:390px;height:23px;background:#fff;border:1px solid #d0d0d0;border-radius:2px;"></div>
<svg class="b" style="left:958px;top:406px;" width="11" height="8" viewBox="0 0 11 8"><path d="M1.500 2.000L5.500 6.000L9.500 2.000" fill="none" stroke="#606060" stroke-width="1"/></svg>
<div class="t" style="left:581px;top:452.00px;font-size:13px;color:#000;letter-spacing:0.037px;">Wochenstd. pro Halbj.: 00 | 00 | 00 | 00</div>
<div class="b" style="left:580px;top:468px;width:399px;height:26px;background:#fff;border:1px solid #808080;border-right-color:#c0c0c0;border-bottom-color:#c0c0c0;"></div>
<div class="t" style="left:582.5px;top:475.84px;font-size:12px;color:#f01010;letter-spacing:0.087px;">zur Inform.: Sportteilnahme ohne Benotung [t] im</div>
<div class="t" style="left:851px;top:475.84px;font-size:12px;color:#000;">-</div>
<div class="t" style="left:884px;top:475.84px;font-size:12px;color:#000;">-</div>
<div class="t" style="left:917px;top:475.84px;font-size:12px;color:#000;">-</div>
<div class="t" style="left:950px;top:475.84px;font-size:12px;color:#000;">-</div>
<div class="b" style="left:28px;top:826px;width:1268px;height:54px;background:#ffefd5;border-top:1px solid #707070;border-left:1px solid #707070;"></div>
<div class="t" style="left:31px;top:828.84px;font-size:12px;color:#000;letter-spacing:0.133px;">--- Kurswahl ist leer ---</div>
<div class="b" style="left:23px;top:880px;width:1290px;height:16px;background:#f0f0f0;"></div>
<div class="b" style="left:40px;top:887px;width:1218px;height:2px;background:#707070;"></div>
<div class="b" style="left:1297px;top:311px;width:16px;height:570px;background:#f0f0f0;"></div>
<div class="b" style="left:1304px;top:327px;width:2px;height:464px;background:#707070;"></div>
<div class="b" style="left:28px;top:498px;width:1268px;height:320px;overflow:hidden;">
<div class="b" style="left:0px;top:0px;width:109px;height:320px;background:#efefef;"></div>
<div class="b" style="left:110px;top:0px;width:45px;height:20px;background:#ffff52;"></div>
<div class="b" style="left:155px;top:0px;width:45px;height:20px;background:#ffff52;"></div>
<div class="b" style="left:200px;top:0px;width:45px;height:20px;background:#ffff52;"></div>
<div class="b" style="left:245px;top:0px;width:45px;height:20px;background:#ffff52;"></div>
<div class="b" style="left:290px;top:0px;width:45px;height:20px;background:#ffff52;"></div>
<div class="b" style="left:335px;top:0px;width:45px;height:20px;background:#ffff52;"></div>
<div class="b" style="left:380px;top:0px;width:45px;height:20px;background:#f08080;"></div>
<div class="b" style="left:425px;top:0px;width:45px;height:20px;background:#f08080;"></div>
<div class="b" style="left:470px;top:0px;width:45px;height:20px;background:#f08080;"></div>
<div class="b" style="left:515px;top:0px;width:45px;height:20px;background:#f08080;"></div>
<div class="b" style="left:560px;top:0px;width:45px;height:20px;background:#f08080;"></div>
<div class="b" style="left:605px;top:0px;width:45px;height:20px;background:#f08080;"></div>
<div class="b" style="left:650px;top:0px;width:45px;height:20px;background:#a9edc4;"></div>
<div class="b" style="left:695px;top:0px;width:45px;height:20px;background:#a9edc4;"></div>
<div class="b" style="left:740px;top:0px;width:45px;height:20px;background:#a9edc4;"></div>
<div class="b" style="left:785px;top:0px;width:45px;height:20px;background:#a9edc4;"></div>
<div class="b" style="left:830px;top:0px;width:45px;height:20px;background:#a9edc4;"></div>
<div class="b" style="left:875px;top:0px;width:45px;height:20px;background:#6cb4c2;"></div>
<div class="b" style="left:920px;top:0px;width:45px;height:20px;background:#ffff52;"></div>
<div class="b" style="left:965px;top:0px;width:45px;height:20px;background:#ffff52;"></div>
<div class="b" style="left:1010px;top:0px;width:45px;height:20px;background:#f08080;"></div>
<div class="b" style="left:1055px;top:0px;width:45px;height:20px;background:#a9edc4;"></div>
<div class="b" style="left:1100px;top:0px;width:45px;height:20px;background:#a9edc4;"></div>
<div class="b" style="left:1145px;top:0px;width:45px;height:20px;background:#a9edc4;"></div>
<div class="b" style="left:1190px;top:0px;width:45px;height:20px;background:#a9edc4;"></div>
<div class="b" style="left:1235px;top:0px;width:45px;height:20px;background:#ff8c40;"></div>
<div class="b" style="left:110px;top:160px;width:45px;height:20px;background:#ffff52;"></div>
<div class="b" style="left:155px;top:160px;width:45px;height:20px;background:#ffff52;"></div>
<div class="b" style="left:200px;top:160px;width:45px;height:20px;background:#ffff52;"></div>
<div class="b" style="left:245px;top:160px;width:45px;height:20px;background:#ffff52;"></div>
<div class="b" style="left:290px;top:160px;width:45px;height:20px;background:#ffff52;"></div>
<div class="b" style="left:335px;top:160px;width:45px;height:20px;background:#ffff52;"></div>
<div class="b" style="left:380px;top:160px;width:45px;height:20px;background:#f08080;"></div>
<div class="b" style="left:425px;top:160px;width:45px;height:20px;background:#f08080;"></div>
<div class="b" style="left:470px;top:160px;width:45px;height:20px;background:#f08080;"></div>
<div class="b" style="left:515px;top:160px;width:45px;height:20px;background:#f08080;"></div>
<div class="b" style="left:560px;top:160px;width:45px;height:20px;background:#f08080;"></div>
<div class="b" style="left:605px;top:160px;width:45px;height:20px;background:#f08080;"></div>
<div class="b" style="left:650px;top:160px;width:45px;height:20px;background:#a9edc4;"></div>
<div class="b" style="left:695px;top:160px;width:45px;height:20px;background:#a9edc4;"></div>
<div class="b" style="left:740px;top:160px;width:45px;height:20px;background:#a9edc4;"></div>
<div class="b" style="left:785px;top:160px;width:45px;height:20px;background:#a9edc4;"></div>
<div class="b" style="left:830px;top:160px;width:45px;height:20px;background:#a9edc4;"></div>
<div class="b" style="left:875px;top:160px;width:45px;height:20px;background:#6cb4c2;"></div>
<div class="b" style="left:920px;top:160px;width:45px;height:20px;background:#ffff52;"></div>
<div class="b" style="left:965px;top:160px;width:45px;height:20px;background:#ffff52;"></div>
<div class="b" style="left:1010px;top:160px;width:45px;height:20px;background:#f08080;"></div>
<div class="b" style="left:1055px;top:160px;width:45px;height:20px;background:#a9edc4;"></div>
<div class="b" style="left:1100px;top:160px;width:45px;height:20px;background:#a9edc4;"></div>
<div class="b" style="left:1145px;top:160px;width:45px;height:20px;background:#a9edc4;"></div>
<div class="b" style="left:1190px;top:160px;width:45px;height:20px;background:#a9edc4;"></div>
<div class="b" style="left:1235px;top:160px;width:45px;height:20px;background:#ff8c40;"></div>
<div class="b" style="left:110px;top:180px;width:1158px;height:60px;background:#ffffe1;"></div>
<div class="b" style="left:0px;top:19px;width:110px;height:1px;background:#808080;"></div>
<div class="b" style="left:110px;top:19px;width:1158px;height:1px;background:#808080;"></div>
<div class="b" style="left:0px;top:39px;width:110px;height:1px;background:#808080;"></div>
<div class="b" style="left:110px;top:39px;width:1158px;height:1px;background:#808080;"></div>
<div class="b" style="left:0px;top:59px;width:110px;height:1px;background:#808080;"></div>
<div class="b" style="left:110px;top:59px;width:1158px;height:1px;background:#808080;"></div>
<div class="b" style="left:0px;top:79px;width:110px;height:1px;background:#808080;"></div>
<div class="b" style="left:110px;top:79px;width:1158px;height:1px;background:#808080;"></div>
<div class="b" style="left:0px;top:99px;width:110px;height:1px;background:#808080;"></div>
<div class="b" style="left:110px;top:99px;width:1158px;height:1px;background:#808080;"></div>
<div class="b" style="left:0px;top:119px;width:110px;height:1px;background:#808080;"></div>
<div class="b" style="left:110px;top:119px;width:1158px;height:1px;background:#808080;"></div>
<div class="b" style="left:0px;top:139px;width:110px;height:1px;background:#808080;"></div>
<div class="b" style="left:110px;top:139px;width:1158px;height:1px;background:#808080;"></div>
<div class="b" style="left:0px;top:159px;width:110px;height:1px;background:#808080;"></div>
<div class="b" style="left:110px;top:159px;width:1158px;height:1px;background:#808080;"></div>
<div class="b" style="left:0px;top:179px;width:110px;height:1px;background:#808080;"></div>
<div class="b" style="left:110px;top:179px;width:1158px;height:1px;background:#808080;"></div>
<div class="b" style="left:0px;top:199px;width:110px;height:1px;background:#808080;"></div>
<div class="b" style="left:110px;top:199px;width:1158px;height:1px;background:#b8b8b8;"></div>
<div class="b" style="left:0px;top:219px;width:110px;height:1px;background:#808080;"></div>
<div class="b" style="left:110px;top:219px;width:1158px;height:1px;background:#b8b8b8;"></div>
<div class="b" style="left:0px;top:239px;width:110px;height:1px;background:#808080;"></div>
<div class="b" style="left:110px;top:239px;width:1158px;height:1px;background:#b8b8b8;"></div>
<div class="b" style="left:0px;top:259px;width:110px;height:1px;background:#808080;"></div>
<div class="b" style="left:110px;top:259px;width:1158px;height:1px;background:#b8b8b8;"></div>
<div class="b" style="left:0px;top:279px;width:110px;height:1px;background:#808080;"></div>
<div class="b" style="left:110px;top:279px;width:1158px;height:1px;background:#b8b8b8;"></div>
<div class="b" style="left:0px;top:299px;width:110px;height:1px;background:#808080;"></div>
<div class="b" style="left:110px;top:299px;width:1158px;height:1px;background:#b8b8b8;"></div>
<div class="b" style="left:0px;top:319px;width:110px;height:1px;background:#808080;"></div>
<div class="b" style="left:110px;top:319px;width:1158px;height:1px;background:#b8b8b8;"></div>
<div class="b" style="left:54px;top:0px;width:1px;height:320px;background:#808080;"></div>
<div class="b" style="left:109px;top:0px;width:1px;height:320px;background:#808080;"></div>
<div class="b" style="left:154px;top:0px;width:1px;height:180px;background:#808080;"></div>
<div class="b" style="left:154px;top:180px;width:1px;height:140px;background:#b8b8b8;"></div>
<div class="b" style="left:199px;top:0px;width:1px;height:180px;background:#808080;"></div>
<div class="b" style="left:199px;top:180px;width:1px;height:140px;background:#b8b8b8;"></div>
<div class="b" style="left:244px;top:0px;width:1px;height:180px;background:#808080;"></div>
<div class="b" style="left:244px;top:180px;width:1px;height:140px;background:#b8b8b8;"></div>
<div class="b" style="left:289px;top:0px;width:1px;height:180px;background:#808080;"></div>
<div class="b" style="left:289px;top:180px;width:1px;height:140px;background:#b8b8b8;"></div>
<div class="b" style="left:334px;top:0px;width:1px;height:180px;background:#808080;"></div>
<div class="b" style="left:334px;top:180px;width:1px;height:140px;background:#b8b8b8;"></div>
<div class="b" style="left:379px;top:0px;width:1px;height:180px;background:#808080;"></div>
<div class="b" style="left:379px;top:180px;width:1px;height:140px;background:#b8b8b8;"></div>
<div class="b" style="left:424px;top:0px;width:1px;height:180px;background:#808080;"></div>
<div class="b" style="left:424px;top:180px;width:1px;height:140px;background:#b8b8b8;"></div>
<div class="b" style="left:469px;top:0px;width:1px;height:180px;background:#808080;"></div>
<div class="b" style="left:469px;top:180px;width:1px;height:140px;background:#b8b8b8;"></div>
<div class="b" style="left:514px;top:0px;width:1px;height:180px;background:#808080;"></div>
<div class="b" style="left:514px;top:180px;width:1px;height:140px;background:#b8b8b8;"></div>
<div class="b" style="left:559px;top:0px;width:1px;height:180px;background:#808080;"></div>
<div class="b" style="left:559px;top:180px;width:1px;height:140px;background:#b8b8b8;"></div>
<div class="b" style="left:604px;top:0px;width:1px;height:180px;background:#808080;"></div>
<div class="b" style="left:604px;top:180px;width:1px;height:140px;background:#b8b8b8;"></div>
<div class="b" style="left:649px;top:0px;width:1px;height:180px;background:#808080;"></div>
<div class="b" style="left:649px;top:180px;width:1px;height:140px;background:#b8b8b8;"></div>
<div class="b" style="left:694px;top:0px;width:1px;height:180px;background:#808080;"></div>
<div class="b" style="left:694px;top:180px;width:1px;height:140px;background:#b8b8b8;"></div>
<div class="b" style="left:739px;top:0px;width:1px;height:180px;background:#808080;"></div>
<div class="b" style="left:739px;top:180px;width:1px;height:140px;background:#b8b8b8;"></div>
<div class="b" style="left:784px;top:0px;width:1px;height:180px;background:#808080;"></div>
<div class="b" style="left:784px;top:180px;width:1px;height:140px;background:#b8b8b8;"></div>
<div class="b" style="left:829px;top:0px;width:1px;height:180px;background:#808080;"></div>
<div class="b" style="left:829px;top:180px;width:1px;height:140px;background:#b8b8b8;"></div>
<div class="b" style="left:874px;top:0px;width:1px;height:180px;background:#808080;"></div>
<div class="b" style="left:874px;top:180px;width:1px;height:140px;background:#b8b8b8;"></div>
<div class="b" style="left:919px;top:0px;width:1px;height:180px;background:#808080;"></div>
<div class="b" style="left:919px;top:180px;width:1px;height:140px;background:#b8b8b8;"></div>
<div class="b" style="left:964px;top:0px;width:1px;height:180px;background:#808080;"></div>
<div class="b" style="left:964px;top:180px;width:1px;height:140px;background:#b8b8b8;"></div>
<div class="b" style="left:1009px;top:0px;width:1px;height:180px;background:#808080;"></div>
<div class="b" style="left:1009px;top:180px;width:1px;height:140px;background:#b8b8b8;"></div>
<div class="b" style="left:1054px;top:0px;width:1px;height:180px;background:#808080;"></div>
<div class="b" style="left:1054px;top:180px;width:1px;height:140px;background:#b8b8b8;"></div>
<div class="b" style="left:1099px;top:0px;width:1px;height:180px;background:#808080;"></div>
<div class="b" style="left:1099px;top:180px;width:1px;height:140px;background:#b8b8b8;"></div>
<div class="b" style="left:1144px;top:0px;width:1px;height:180px;background:#808080;"></div>
<div class="b" style="left:1144px;top:180px;width:1px;height:140px;background:#b8b8b8;"></div>
<div class="b" style="left:1189px;top:0px;width:1px;height:180px;background:#808080;"></div>
<div class="b" style="left:1189px;top:180px;width:1px;height:140px;background:#b8b8b8;"></div>
<div class="b" style="left:1234px;top:0px;width:1px;height:180px;background:#808080;"></div>
<div class="b" style="left:1234px;top:180px;width:1px;height:140px;background:#b8b8b8;"></div>
<div class="b" style="left:1279px;top:0px;width:1px;height:180px;background:#808080;"></div>
<div class="b" style="left:1279px;top:180px;width:1px;height:140px;background:#b8b8b8;"></div>
<div class="gc" style="left:110px;top:0px;">D</div>
<div class="gc" style="left:155px;top:0px;">E</div>
<div class="gc" style="left:200px;top:0px;">F</div>
<div class="gc" style="left:245px;top:0px;">L</div>
<div class="gc" style="left:290px;top:0px;">I</div>
<div class="gc" style="left:335px;top:0px;">BK</div>
<div class="gc" style="left:380px;top:0px;">G</div>
<div class="gc" style="left:425px;top:0px;">Geo</div>
<div class="gc" style="left:470px;top:0px;">Gk</div>
<div class="gc" style="left:515px;top:0px;">Wi</div>
<div class="gc" style="left:560px;top:0px;">Rel</div>
<div class="gc" style="left:605px;top:0px;">Eth</div>
<div class="gc" style="left:650px;top:0px;">M</div>
<div class="gc" style="left:695px;top:0px;">Ph</div>
<div class="gc" style="left:740px;top:0px;">Ch</div>
<div class="gc" style="left:785px;top:0px;">Bio</div>
<div class="gc" style="left:830px;top:0px;">NWT</div>
<div class="gc" style="left:875px;top:0px;">S</div>
<div class="gc" style="left:920px;top:0px;">Fr</div>
<div class="gc" style="left:965px;top:0px;">Lit</div>
<div class="gc" style="left:1010px;top:0px;">Psy</div>
<div class="gc" style="left:1055px;top:0px;">Ast</div>
<div class="gc" style="left:1100px;top:0px;">DG</div>
<div class="gc" style="left:1145px;top:0px;">Gl</div>
<div class="gc" style="left:1190px;top:0px;">Inf</div>
<div class="gc" style="left:1235px;top:0px;">sf</div>
<div class="gc" style="left:110px;top:160px;">D</div>
<div class="gc" style="left:155px;top:160px;">E</div>
<div class="gc" style="left:200px;top:160px;">F</div>
<div class="gc" style="left:245px;top:160px;">L</div>
<div class="gc" style="left:290px;top:160px;">I</div>
<div class="gc" style="left:335px;top:160px;">BK</div>
<div class="gc" style="left:380px;top:160px;">G</div>
<div class="gc" style="left:425px;top:160px;">Geo</div>
<div class="gc" style="left:470px;top:160px;">Gk</div>
<div class="gc" style="left:515px;top:160px;">Wi</div>
<div class="gc" style="left:560px;top:160px;">Rel</div>
<div class="gc" style="left:605px;top:160px;">Eth</div>
<div class="gc" style="left:650px;top:160px;">M</div>
<div class="gc" style="left:695px;top:160px;">Ph</div>
<div class="gc" style="left:740px;top:160px;">Ch</div>
<div class="gc" style="left:785px;top:160px;">Bio</div>
<div class="gc" style="left:830px;top:160px;">NWT</div>
<div class="gc" style="left:875px;top:160px;">S</div>
<div class="gc" style="left:920px;top:160px;">Fr</div>
<div class="gc" style="left:965px;top:160px;">Lit</div>
<div class="gc" style="left:1010px;top:160px;">Psy</div>
<div class="gc" style="left:1055px;top:160px;">Ast</div>
<div class="gc" style="left:1100px;top:160px;">DG</div>
<div class="gc" style="left:1145px;top:160px;">Gl</div>
<div class="gc" style="left:1190px;top:160px;">Inf</div>
<div class="gc" style="left:1235px;top:160px;">sf</div>
<div class="gc" style="left:155px;top:20px;">4</div>
<div class="gc" style="left:200px;top:20px;">4</div>
<div class="gc" style="left:245px;top:20px;">4</div>
<div class="gc" style="left:290px;top:20px;">4</div>
<div class="gc" style="left:335px;top:20px;">4</div>
<div class="gc" style="left:380px;top:20px;">4</div>
<div class="gc" style="left:425px;top:20px;letter-spacing:0.7px;">*23</div>
<div class="gc" style="left:470px;top:20px;letter-spacing:0.7px;">*14</div>
<div class="gc" style="left:560px;top:20px;">4</div>
<div class="gc" style="left:605px;top:20px;">4</div>
<div class="gc" style="left:695px;top:20px;">4</div>
<div class="gc" style="left:740px;top:20px;">4</div>
<div class="gc" style="left:785px;top:20px;">4</div>
<div class="gc" style="left:830px;top:20px;">4</div>
<div class="gc" style="left:875px;top:20px;">4</div>
<div class="gc" style="left:920px;top:20px;">4</div>
<div class="gc" style="left:1190px;top:20px;">4</div>
<div class="gc" style="left:1235px;top:20px;letter-spacing:0.7px;">*12</div>
<div class="gc" style="left:155px;top:40px;letter-spacing:0.7px;">12</div>
<div class="gc" style="left:200px;top:40px;letter-spacing:0.7px;">12</div>
<div class="gc" style="left:245px;top:40px;letter-spacing:0.7px;">12</div>
<div class="gc" style="left:290px;top:40px;letter-spacing:0.7px;">12</div>
<div class="gc" style="left:335px;top:40px;letter-spacing:0.7px;">12</div>
<div class="gc" style="left:425px;top:40px;letter-spacing:0.7px;">12</div>
<div class="gc" style="left:470px;top:40px;letter-spacing:0.7px;">12</div>
<div class="gc" style="left:560px;top:40px;letter-spacing:0.7px;">12</div>
<div class="gc" style="left:605px;top:40px;letter-spacing:0.7px;">12</div>
<div class="gc" style="left:695px;top:40px;letter-spacing:0.7px;">12</div>
<div class="gc" style="left:740px;top:40px;letter-spacing:0.7px;">12</div>
<div class="gc" style="left:785px;top:40px;letter-spacing:0.7px;">12</div>
<div class="gc" style="left:830px;top:40px;letter-spacing:0.7px;">12</div>
<div class="gc" style="left:875px;top:40px;letter-spacing:0.7px;">12</div>
<div class="gc" style="left:920px;top:40px;letter-spacing:0.7px;">12</div>
<div class="gc" style="left:965px;top:40px;letter-spacing:0.7px;">12</div>
<div class="gc" style="left:1010px;top:40px;letter-spacing:0.7px;">12</div>
<div class="gc" style="left:1055px;top:40px;letter-spacing:0.7px;">12</div>
<div class="gc" style="left:1100px;top:40px;letter-spacing:0.7px;">12</div>
<div class="gc" style="left:1145px;top:40px;letter-spacing:0.7px;">12</div>
<div class="gc" style="left:1190px;top:40px;letter-spacing:0.7px;">12</div>
<div class="gc" style="left:1235px;top:40px;letter-spacing:0.7px;">34</div>
<div class="gc" style="left:155px;top:60px;letter-spacing:0.7px;">34</div>
<div class="gc" style="left:200px;top:60px;letter-spacing:0.7px;">34</div>
<div class="gc" style="left:245px;top:60px;letter-spacing:0.7px;">34</div>
<div class="gc" style="left:290px;top:60px;letter-spacing:0.7px;">34</div>
<div class="gc" style="left:335px;top:60px;letter-spacing:0.7px;">34</div>
<div class="gc" style="left:425px;top:60px;letter-spacing:0.7px;">34</div>
<div class="gc" style="left:470px;top:60px;letter-spacing:0.7px;">34</div>
<div class="gc" style="left:560px;top:60px;letter-spacing:0.7px;">34</div>
<div class="gc" style="left:605px;top:60px;letter-spacing:0.7px;">34</div>
<div class="gc" style="left:695px;top:60px;letter-spacing:0.7px;">34</div>
<div class="gc" style="left:740px;top:60px;letter-spacing:0.7px;">34</div>
<div class="gc" style="left:785px;top:60px;letter-spacing:0.7px;">34</div>
<div class="gc" style="left:830px;top:60px;letter-spacing:0.7px;">34</div>
<div class="gc" style="left:875px;top:60px;letter-spacing:0.7px;">34</div>
<div class="gc" style="left:920px;top:60px;letter-spacing:0.7px;">34</div>
<div class="gc" style="left:965px;top:60px;letter-spacing:0.7px;">34</div>
<div class="gc" style="left:1010px;top:60px;letter-spacing:0.7px;">34</div>
<div class="gc" style="left:1055px;top:60px;letter-spacing:0.7px;">34</div>
<div class="gc" style="left:1100px;top:60px;letter-spacing:0.7px;">34</div>
<div class="gc" style="left:1145px;top:60px;letter-spacing:0.7px;">34</div>
<div class="gc" style="left:1190px;top:60px;letter-spacing:0.7px;">34</div>
<div class="gc" style="left:1235px;top:60px;letter-spacing:0.7px;">23</div>
<div class="gc" style="left:425px;top:80px;letter-spacing:0.7px;">13</div>
<div class="gc" style="left:470px;top:80px;letter-spacing:0.7px;">13</div>
<div class="gc" style="left:1235px;top:80px;letter-spacing:0.7px;">13</div>
<div class="gc" style="left:425px;top:100px;letter-spacing:0.7px;">14</div>
<div class="gc" style="left:470px;top:100px;letter-spacing:0.7px;">23</div>
<div class="gc" style="left:1235px;top:100px;letter-spacing:0.7px;">14</div>
<div class="gc" style="left:155px;top:120px;">E</div>
<div class="gc" style="left:200px;top:120px;">E</div>
<div class="gc" style="left:245px;top:120px;">E</div>
<div class="gc" style="left:290px;top:120px;">E</div>
<div class="gc" style="left:335px;top:120px;">E</div>
<div class="gc" style="left:425px;top:120px;letter-spacing:0.7px;">24</div>
<div class="gc" style="left:470px;top:120px;letter-spacing:0.7px;">24</div>
<div class="gc" style="left:560px;top:120px;">E</div>
<div class="gc" style="left:605px;top:120px;">E</div>
<div class="gc" style="left:695px;top:120px;">E</div>
<div class="gc" style="left:740px;top:120px;">E</div>
<div class="gc" style="left:785px;top:120px;">E</div>
<div class="gc" style="left:830px;top:120px;">E</div>
<div class="gc" style="left:875px;top:120px;">E</div>
<div class="gc" style="left:920px;top:120px;">E</div>
<div class="gc" style="left:965px;top:120px;">E</div>
<div class="gc" style="left:1010px;top:120px;">E</div>
<div class="gc" style="left:1055px;top:120px;">E</div>
<div class="gc" style="left:1100px;top:120px;">E</div>
<div class="gc" style="left:1145px;top:120px;">E</div>
<div class="gc" style="left:1190px;top:120px;">E</div>
<div class="gc" style="left:1235px;top:120px;letter-spacing:0.7px;">24</div>
<div class="gc" style="left:155px;top:140px;">.</div>
<div class="gc" style="left:200px;top:140px;">.</div>
<div class="gc" style="left:245px;top:140px;">.</div>
<div class="gc" style="left:290px;top:140px;">.</div>
<div class="gc" style="left:335px;top:140px;">.</div>
<div class="gc" style="left:380px;top:140px;">.</div>
<div class="gc" style="left:425px;top:140px;">.</div>
<div class="gc" style="left:470px;top:140px;">.</div>
<div class="gc" style="left:515px;top:140px;">.</div>
<div class="gc" style="left:560px;top:140px;">.</div>
<div class="gc" style="left:605px;top:140px;">.</div>
<div class="gc" style="left:695px;top:140px;">.</div>
<div class="gc" style="left:740px;top:140px;">.</div>
<div class="gc" style="left:785px;top:140px;">.</div>
<div class="gc" style="left:830px;top:140px;">.</div>
<div class="gc" style="left:875px;top:140px;">.</div>
<div class="gc" style="left:920px;top:140px;">.</div>
<div class="gc" style="left:965px;top:140px;">.</div>
<div class="gc" style="left:1010px;top:140px;">.</div>
<div class="gc" style="left:1055px;top:140px;">.</div>
<div class="gc" style="left:1100px;top:140px;">.</div>
<div class="gc" style="left:1145px;top:140px;">.</div>
<div class="gc" style="left:1190px;top:140px;">.</div>
<div class="gc" style="left:1235px;top:140px;">.</div>
<div class="gc" style="left:110px;top:180px;color:#2e9e56;">.</div>
<div class="gc" style="left:155px;top:180px;color:#2e9e56;">.</div>
<div class="gc" style="left:200px;top:180px;color:#2e9e56;">.</div>
<div class="gc" style="left:245px;top:180px;color:#2e9e56;">.</div>
<div class="gc" style="left:290px;top:180px;color:#2e9e56;">.</div>
<div class="gc" style="left:335px;top:180px;color:#2e9e56;">.</div>
<div class="gc" style="left:380px;top:180px;color:#2e9e56;">.</div>
<div class="gc" style="left:425px;top:180px;color:#2e9e56;">.</div>
<div class="gc" style="left:470px;top:180px;color:#2e9e56;">.</div>
<div class="gc" style="left:515px;top:180px;color:#2e9e56;">.</div>
<div class="gc" style="left:560px;top:180px;color:#2e9e56;">.</div>
<div class="gc" style="left:605px;top:180px;color:#2e9e56;">.</div>
<div class="gc" style="left:650px;top:180px;color:#2e9e56;">.</div>
<div class="gc" style="left:695px;top:180px;color:#2e9e56;">.</div>
<div class="gc" style="left:740px;top:180px;color:#2e9e56;">.</div>
<div class="gc" style="left:785px;top:180px;color:#2e9e56;">.</div>
<div class="gc" style="left:830px;top:180px;color:#2e9e56;">.</div>
<div class="gc" style="left:875px;top:180px;color:#2e9e56;">.</div>
<div class="gc" style="left:920px;top:180px;color:#2e9e56;">.</div>
<div class="gc" style="left:965px;top:180px;color:#2e9e56;">.</div>
<div class="gc" style="left:1010px;top:180px;color:#2e9e56;">.</div>
<div class="gc" style="left:1055px;top:180px;color:#2e9e56;">.</div>
<div class="gc" style="left:1100px;top:180px;color:#2e9e56;">.</div>
<div class="gc" style="left:1145px;top:180px;color:#2e9e56;">.</div>
<div class="gc" style="left:1190px;top:180px;color:#2e9e56;">.</div>
<div class="gc" style="left:1235px;top:180px;color:#2e9e56;">.</div>
<div class="gc" style="left:110px;top:200px;">.</div>
<div class="gc" style="left:155px;top:200px;">.</div>
<div class="gc" style="left:200px;top:200px;">.</div>
<div class="gc" style="left:245px;top:200px;">.</div>
<div class="gc" style="left:290px;top:200px;">.</div>
<div class="gc" style="left:335px;top:200px;">.</div>
<div class="gc" style="left:380px;top:200px;">.</div>
<div class="gc" style="left:425px;top:200px;">.</div>
<div class="gc" style="left:470px;top:200px;">.</div>
<div class="gc" style="left:515px;top:200px;">.</div>
<div class="gc" style="left:560px;top:200px;">.</div>
<div class="gc" style="left:605px;top:200px;">.</div>
<div class="gc" style="left:650px;top:200px;">.</div>
<div class="gc" style="left:695px;top:200px;">.</div>
<div class="gc" style="left:740px;top:200px;">.</div>
<div class="gc" style="left:785px;top:200px;">.</div>
<div class="gc" style="left:830px;top:200px;">.</div>
<div class="gc" style="left:875px;top:200px;">.</div>
<div class="gc" style="left:920px;top:200px;">.</div>
<div class="gc" style="left:965px;top:200px;">.</div>
<div class="gc" style="left:1010px;top:200px;">.</div>
<div class="gc" style="left:1055px;top:200px;">.</div>
<div class="gc" style="left:1100px;top:200px;">.</div>
<div class="gc" style="left:1145px;top:200px;">.</div>
<div class="gc" style="left:1190px;top:200px;">.</div>
<div class="gc" style="left:1235px;top:200px;">.</div>
<div class="gc" style="left:110px;top:220px;">.</div>
<div class="gc" style="left:155px;top:220px;">.</div>
<div class="gc" style="left:200px;top:220px;">.</div>
<div class="gc" style="left:245px;top:220px;">.</div>
<div class="gc" style="left:290px;top:220px;">.</div>
<div class="gc" style="left:335px;top:220px;">.</div>
<div class="gc" style="left:380px;top:220px;">.</div>
<div class="gc" style="left:425px;top:220px;">.</div>
<div class="gc" style="left:470px;top:220px;">.</div>
<div class="gc" style="left:515px;top:220px;">.</div>
<div class="gc" style="left:560px;top:220px;">.</div>
<div class="gc" style="left:605px;top:220px;">.</div>
<div class="gc" style="left:650px;top:220px;">.</div>
<div class="gc" style="left:695px;top:220px;">.</div>
<div class="gc" style="left:740px;top:220px;">.</div>
<div class="gc" style="left:785px;top:220px;">.</div>
<div class="gc" style="left:830px;top:220px;">.</div>
<div class="gc" style="left:875px;top:220px;">.</div>
<div class="gc" style="left:920px;top:220px;">.</div>
<div class="gc" style="left:965px;top:220px;">.</div>
<div class="gc" style="left:1010px;top:220px;">.</div>
<div class="gc" style="left:1055px;top:220px;">.</div>
<div class="gc" style="left:1100px;top:220px;">.</div>
<div class="gc" style="left:1145px;top:220px;">.</div>
<div class="gc" style="left:1190px;top:220px;">.</div>
<div class="gc" style="left:1235px;top:220px;">.</div>
<div class="gc" style="left:110px;top:240px;font-weight:normal;">.</div>
<div class="gc" style="left:155px;top:240px;font-weight:normal;">.</div>
<div class="gc" style="left:200px;top:240px;font-weight:normal;">.</div>
<div class="gc" style="left:245px;top:240px;font-weight:normal;">.</div>
<div class="gc" style="left:290px;top:240px;font-weight:normal;">.</div>
<div class="gc" style="left:335px;top:240px;font-weight:normal;">.</div>
<div class="gc" style="left:380px;top:240px;font-weight:normal;">.</div>
<div class="gc" style="left:425px;top:240px;font-weight:normal;">.</div>
<div class="gc" style="left:470px;top:240px;font-weight:normal;">.</div>
<div class="gc" style="left:515px;top:240px;letter-spacing:-0.5px;">--</div>
<div class="gc" style="left:560px;top:240px;font-weight:normal;">.</div>
<div class="gc" style="left:605px;top:240px;font-weight:normal;">.</div>
<div class="gc" style="left:650px;top:240px;font-weight:normal;">.</div>
<div class="gc" style="left:695px;top:240px;font-weight:normal;">.</div>
<div class="gc" style="left:740px;top:240px;font-weight:normal;">.</div>
<div class="gc" style="left:785px;top:240px;font-weight:normal;">.</div>
<div class="gc" style="left:830px;top:240px;font-weight:normal;">.</div>
<div class="gc" style="left:875px;top:240px;font-weight:normal;">.</div>
<div class="gc" style="left:920px;top:240px;font-weight:normal;">.</div>
<div class="gc" style="left:965px;top:240px;font-weight:normal;">.</div>
<div class="gc" style="left:1010px;top:240px;font-weight:normal;">.</div>
<div class="gc" style="left:1055px;top:240px;font-weight:normal;">.</div>
<div class="gc" style="left:1100px;top:240px;font-weight:normal;">.</div>
<div class="gc" style="left:1145px;top:240px;font-weight:normal;">.</div>
<div class="gc" style="left:1190px;top:240px;font-weight:normal;">.</div>
<div class="gc" style="left:1235px;top:240px;font-weight:normal;">.</div>
<div class="gc" style="left:110px;top:260px;font-weight:normal;">.</div>
<div class="gc" style="left:155px;top:260px;font-weight:normal;">.</div>
<div class="gc" style="left:200px;top:260px;font-weight:normal;">.</div>
<div class="gc" style="left:245px;top:260px;font-weight:normal;">.</div>
<div class="gc" style="left:290px;top:260px;font-weight:normal;">.</div>
<div class="gc" style="left:335px;top:260px;font-weight:normal;">.</div>
<div class="gc" style="left:380px;top:260px;font-weight:normal;">.</div>
<div class="gc" style="left:425px;top:260px;font-weight:normal;">.</div>
<div class="gc" style="left:470px;top:260px;font-weight:normal;">.</div>
<div class="gc" style="left:515px;top:260px;letter-spacing:-0.5px;">--</div>
<div class="gc" style="left:560px;top:260px;font-weight:normal;">.</div>
<div class="gc" style="left:605px;top:260px;font-weight:normal;">.</div>
<div class="gc" style="left:650px;top:260px;font-weight:normal;">.</div>
<div class="gc" style="left:695px;top:260px;font-weight:normal;">.</div>
<div class="gc" style="left:740px;top:260px;font-weight:normal;">.</div>
<div class="gc" style="left:785px;top:260px;font-weight:normal;">.</div>
<div class="gc" style="left:830px;top:260px;font-weight:normal;">.</div>
<div class="gc" style="left:875px;top:260px;font-weight:normal;">.</div>
<div class="gc" style="left:920px;top:260px;font-weight:normal;">.</div>
<div class="gc" style="left:965px;top:260px;font-weight:normal;">.</div>
<div class="gc" style="left:1010px;top:260px;font-weight:normal;">.</div>
<div class="gc" style="left:1055px;top:260px;font-weight:normal;">.</div>
<div class="gc" style="left:1100px;top:260px;font-weight:normal;">.</div>
<div class="gc" style="left:1145px;top:260px;font-weight:normal;">.</div>
<div class="gc" style="left:1190px;top:260px;font-weight:normal;">.</div>
<div class="gc" style="left:1235px;top:260px;font-weight:normal;">.</div>
<div class="gc" style="left:110px;top:280px;font-weight:normal;">.</div>
<div class="gc" style="left:155px;top:280px;font-weight:normal;">.</div>
<div class="gc" style="left:200px;top:280px;font-weight:normal;">.</div>
<div class="gc" style="left:245px;top:280px;font-weight:normal;">.</div>
<div class="gc" style="left:290px;top:280px;font-weight:normal;">.</div>
<div class="gc" style="left:335px;top:280px;font-weight:normal;">.</div>
<div class="gc" style="left:380px;top:280px;font-weight:normal;">.</div>
<div class="gc" style="left:425px;top:280px;font-weight:normal;">.</div>
<div class="gc" style="left:470px;top:280px;font-weight:normal;">.</div>
<div class="gc" style="left:515px;top:280px;letter-spacing:-0.5px;">--</div>
<div class="gc" style="left:560px;top:280px;font-weight:normal;">.</div>
<div class="gc" style="left:605px;top:280px;font-weight:normal;">.</div>
<div class="gc" style="left:650px;top:280px;font-weight:normal;">.</div>
<div class="gc" style="left:695px;top:280px;font-weight:normal;">.</div>
<div class="gc" style="left:740px;top:280px;font-weight:normal;">.</div>
<div class="gc" style="left:785px;top:280px;font-weight:normal;">.</div>
<div class="gc" style="left:830px;top:280px;font-weight:normal;">.</div>
<div class="gc" style="left:875px;top:280px;font-weight:normal;">.</div>
<div class="gc" style="left:920px;top:280px;font-weight:normal;">.</div>
<div class="gc" style="left:965px;top:280px;font-weight:normal;">.</div>
<div class="gc" style="left:1010px;top:280px;font-weight:normal;">.</div>
<div class="gc" style="left:1055px;top:280px;font-weight:normal;">.</div>
<div class="gc" style="left:1100px;top:280px;font-weight:normal;">.</div>
<div class="gc" style="left:1145px;top:280px;font-weight:normal;">.</div>
<div class="gc" style="left:1190px;top:280px;font-weight:normal;">.</div>
<div class="gc" style="left:1235px;top:280px;font-weight:normal;">.</div>
<div class="gc" style="left:110px;top:300px;font-weight:normal;">.</div>
<div class="gc" style="left:155px;top:300px;font-weight:normal;">.</div>
<div class="gc" style="left:200px;top:300px;font-weight:normal;">.</div>
<div class="gc" style="left:245px;top:300px;font-weight:normal;">.</div>
<div class="gc" style="left:290px;top:300px;font-weight:normal;">.</div>
<div class="gc" style="left:335px;top:300px;font-weight:normal;">.</div>
<div class="gc" style="left:380px;top:300px;font-weight:normal;">.</div>
<div class="gc" style="left:425px;top:300px;font-weight:normal;">.</div>
<div class="gc" style="left:470px;top:300px;font-weight:normal;">.</div>
<div class="gc" style="left:515px;top:300px;letter-spacing:-0.5px;">--</div>
<div class="gc" style="left:560px;top:300px;font-weight:normal;">.</div>
<div class="gc" style="left:605px;top:300px;font-weight:normal;">.</div>
<div class="gc" style="left:650px;top:300px;font-weight:normal;">.</div>
<div class="gc" style="left:695px;top:300px;font-weight:normal;">.</div>
<div class="gc" style="left:740px;top:300px;font-weight:normal;">.</div>
<div class="gc" style="left:785px;top:300px;font-weight:normal;">.</div>
<div class="gc" style="left:830px;top:300px;font-weight:normal;">.</div>
<div class="gc" style="left:875px;top:300px;font-weight:normal;">.</div>
<div class="gc" style="left:920px;top:300px;font-weight:normal;">.</div>
<div class="gc" style="left:965px;top:300px;font-weight:normal;">.</div>
<div class="gc" style="left:1010px;top:300px;font-weight:normal;">.</div>
<div class="gc" style="left:1055px;top:300px;font-weight:normal;">.</div>
<div class="gc" style="left:1100px;top:300px;font-weight:normal;">.</div>
<div class="gc" style="left:1145px;top:300px;font-weight:normal;">.</div>
<div class="gc" style="left:1190px;top:300px;font-weight:normal;">.</div>
<div class="gc" style="left:1235px;top:300px;font-weight:normal;">.</div>
<div class="gc" style="left:3px;top:180px;width:auto;text-align:left;color:#2e9e56;">BelK.:</div>
<div class="gc" style="left:3px;top:200px;width:auto;text-align:left;color:#000;">Kursz.:</div>
<div class="gc" style="left:3px;top:220px;width:auto;text-align:left;color:#000;">PflAnr.:</div>
<div class="gc" style="left:3px;top:240px;width:auto;text-align:left;color:#000;">Jg1.1</div>
<div class="gc" style="left:3px;top:260px;width:auto;text-align:left;color:#000;">Jg1.2</div>
<div class="gc" style="left:3px;top:280px;width:auto;text-align:left;color:#000;">Jg2.1</div>
<div class="gc" style="left:3px;top:300px;width:auto;text-align:left;color:#000;">Jg2.2</div>
</div>
<div class="b" style="left:1335px;top:94px;width:2px;height:824px;background:#9a969c;"></div>
<div class="t" style="left:1355px;top:109.00px;font-size:13px;color:#000;letter-spacing:-0.086px;">Zahl aktiver Sätze</div>
<div class="t" style="left:1355px;top:131.00px;font-size:13px;color:#000;letter-spacing:0.062px;">Sätze in Auswahl</div>
<div class="t" style="left:1474px;top:109.00px;font-size:13px;color:#000;font-weight:bold;letter-spacing:-0.397px;">001</div>
<div class="t" style="left:1474px;top:131.00px;font-size:13px;color:#000;font-weight:bold;letter-spacing:-0.397px;">001</div>
<div class="b" style="left:1352px;top:156px;width:146px;height:31px;background:#fff;border:1px solid #b8b8b8;border-right-color:#8c8c8c;border-bottom-color:#8c8c8c;"></div>
<div class="b" style="left:1355px;top:159px;width:25px;height:25px;background:#f4f4f4;border:1px solid #707070;border-right-color:#c0c0c0;border-bottom-color:#c0c0c0;"></div>
<div class="b" style="left:1384px;top:159px;width:25px;height:25px;background:#e1e1e1;border:1px solid #ececec;border-right-color:#c8c8c8;border-bottom-color:#c8c8c8;"></div>
<div class="b" style="left:1413px;top:159px;width:25px;height:25px;background:#e1e1e1;border:1px solid #ececec;border-right-color:#c8c8c8;border-bottom-color:#c8c8c8;"></div>
<div class="b" style="left:1441px;top:159px;width:25px;height:25px;background:#e1e1e1;border:1px solid #ececec;border-right-color:#c8c8c8;border-bottom-color:#c8c8c8;"></div>
<div class="b" style="left:1470px;top:159px;width:25px;height:25px;background:#e1e1e1;border:1px solid #ececec;border-right-color:#c8c8c8;border-bottom-color:#c8c8c8;"></div>
<svg class="b" style="left:1363px;top:166px;" width="10" height="10" viewBox="0 0 10 10"><path d="M1.300 8.800L4.600 0.800L7.900 8.800M2.600 6H6.600" fill="none" stroke="#9a9ca4" stroke-width="1.700"/><path d="M0 9.200H2.800M6.400 9.200H9.200" stroke="#9a9ca4" stroke-width="1.500"/></svg>
<svg class="b" style="left:1384px;top:159px;" width="25" height="25" viewBox="0 0 25 25"><path d="M5.500 14L9.500 18L19.500 6.500" fill="none" stroke="#0a4a8a" stroke-width="3.200"/><path d="M5.500 13.500L9.500 17.300L19 6.300" fill="none" stroke="#22a020" stroke-width="2.200"/></svg>
<svg class="b" style="left:1413px;top:159px;" width="25" height="25" viewBox="0 0 25 25"><path d="M4.500 5.500H16.500L12 9.500V17H9.500V9.500z" fill="#8a8a8a" stroke="#202020" stroke-width="0.800"/><path d="M5 19.500h14" stroke="#000" stroke-width="1.200"/><path d="M15.500 8.500L19 13.500H16.700V18H14.300V13.500H12z" fill="#f01010"/></svg>
<svg class="b" style="left:1441px;top:159px;" width="25" height="25" viewBox="0 0 25 25"><circle cx="9" cy="6.500" r="3.500" fill="#f09020"/><circle cx="16.500" cy="8" r="3.300" fill="#903818"/>
<path d="M6 11c2-2 5-2 7 0l1 5h-4l-1 5H6l1-5z" fill="#000"/><path d="M13 12c2-2 5-1 7 1l-1 5h-3l-1 3h-3z" fill="#000"/>
<circle cx="9.500" cy="8.500" r="2.600" fill="#f4e040"/><circle cx="16" cy="10.500" r="2.500" fill="#f4e040"/><circle cx="10" cy="17.500" r="2.500" fill="#f4e040"/></svg>
<svg class="b" style="left:1470px;top:159px;" width="25" height="25" viewBox="0 0 25 25"><path d="M2.500 1.500h6l3 3v8h-9z" fill="#fff" stroke="#000" stroke-width="1"/><path d="M4 5.500h5M4 7.500h5M4 9.500h5" stroke="#000" stroke-width="1" stroke-dasharray="1 1"/>
<path d="M11 7.500h5v4" fill="none" stroke="#e01010" stroke-width="1.300"/><path d="M13.500 10.500l2.500 3l2.500-3" fill="none" stroke="#e01010" stroke-width="1.300"/>
<path d="M6.500 13.500h8l6 2l-3 6.500h-11z" fill="#e8c020" stroke="#000" stroke-width="1"/><path d="M8 21l3-5.500h10l-3.500 6.500z" fill="#6a7a18" stroke="#000" stroke-width="0.800"/></svg>
<div class="b" style="left:1504px;top:108px;width:87px;height:80px;border:1px solid #989098;"></div>
<div class="b" style="left:1510px;top:103px;width:57px;height:12px;background:#fff;"></div>
<div class="t" style="left:1512px;top:103.69px;font-size:11px;color:#000;letter-spacing:-0.069px;">Sch'Zahlen</div>
<div class="t" style="left:1514px;top:121.84px;font-size:12px;color:#000;letter-spacing:0.159px;">000</div>
<div class="b" style="left:1539px;top:117px;width:50px;height:20px;background:#e1e1e1;border:1px solid #f0f0f0;border-right-color:#c4c4c4;border-bottom-color:#c4c4c4;"></div>
<div class="t" style="left:1550.8px;top:121.34px;font-size:12px;color:#000;letter-spacing:-0.392px;">Ext'Z</div>
<div class="t" style="left:1514px;top:145.84px;font-size:12px;color:#000;letter-spacing:0.159px;">000</div>
<div class="b" style="left:1539px;top:141px;width:50px;height:20px;background:#e1e1e1;border:1px solid #f0f0f0;border-right-color:#c4c4c4;border-bottom-color:#c4c4c4;"></div>
<div class="t" style="left:1543.3px;top:145.34px;font-size:12px;color:#000;letter-spacing:-0.14px;">Koop'Z.</div>
<div class="t" style="left:1514px;top:168.84px;font-size:12px;color:#000;letter-spacing:0.159px;">000</div>
<div class="b" style="left:1539px;top:164px;width:50px;height:20px;background:#e1e1e1;border:1px solid #f0f0f0;border-right-color:#c4c4c4;border-bottom-color:#c4c4c4;"></div>
<div class="t" style="left:1543.3px;top:168.34px;font-size:12px;color:#000;letter-spacing:-0.336px;">Löschm</div>
<div class="b" style="left:1353px;top:241px;width:239px;height:28px;background:#e9e9e9;border:1px solid #a0a0a0;border-bottom-color:#8c8c8c;"></div>
<div class="t" style="left:1352px;top:272.69px;font-size:11px;color:#000;letter-spacing:-0.178px;">aktuelle Reihenfolge:</div>
<div class="b" style="left:1353px;top:288px;width:126px;height:22px;background:#fff;border:1px solid #d4d4d4;border-radius:2px;"></div>
<div class="t" style="left:1356.5px;top:292.00px;font-size:13px;color:#000;letter-spacing:-0.25px;">alphabetisch</div>
<svg class="b" style="left:1464px;top:295px;" width="11" height="8" viewBox="0 0 11 8"><path d="M1.500 2.000L5.500 6.000L9.500 2.000" fill="none" stroke="#606060" stroke-width="1"/></svg>
<div class="b" style="left:1483px;top:293px;width:13px;height:13px;background:#f8f8f8;border:1px solid #c8c8c8;border-radius:3px;"></div>
<div class="t" style="left:1499.5px;top:294.69px;font-size:11px;color:#909090;letter-spacing:-0.203px;">Reihenf. umkehren</div>
<div class="b" style="left:1353px;top:311px;width:32px;height:24px;background:#e1e1e1;border:1px solid #ebebeb;border-bottom:1px solid #8c8c8c;box-shadow:inset 0 0 0 1px #fff;"></div>
<div class="t" style="left:1358px;top:316.00px;font-size:13px;color:#000;letter-spacing:-0.397px;">001</div>
<div class="b" style="left:1390px;top:311px;width:159px;height:24px;background:#e1e1e1;border:1px solid #ebebeb;border-bottom:1px solid #8c8c8c;box-shadow:inset 0 0 0 1px #fff;"></div>
<div class="t" style="left:1392.5px;top:316.00px;font-size:13px;color:#000;letter-spacing:-0.135px;">N2022, V2022</div>
<div class="b" style="left:1552px;top:311px;width:40px;height:24px;background:#e1e1e1;border:1px solid #ebebeb;border-bottom:1px solid #8c8c8c;box-shadow:inset 0 0 0 1px #fff;"></div>
<div class="t" style="left:1568.5px;top:316.00px;font-size:13px;color:#000;">?</div>
<div class="b" style="left:1353px;top:346px;width:247px;height:18px;background:#c4d4e6;border:1px dotted #000;"></div>
<div class="t" style="left:1355px;top:348.15px;font-size:14px;color:#000;letter-spacing:0.123px;">N2022, V2022</div>
</body></html>
